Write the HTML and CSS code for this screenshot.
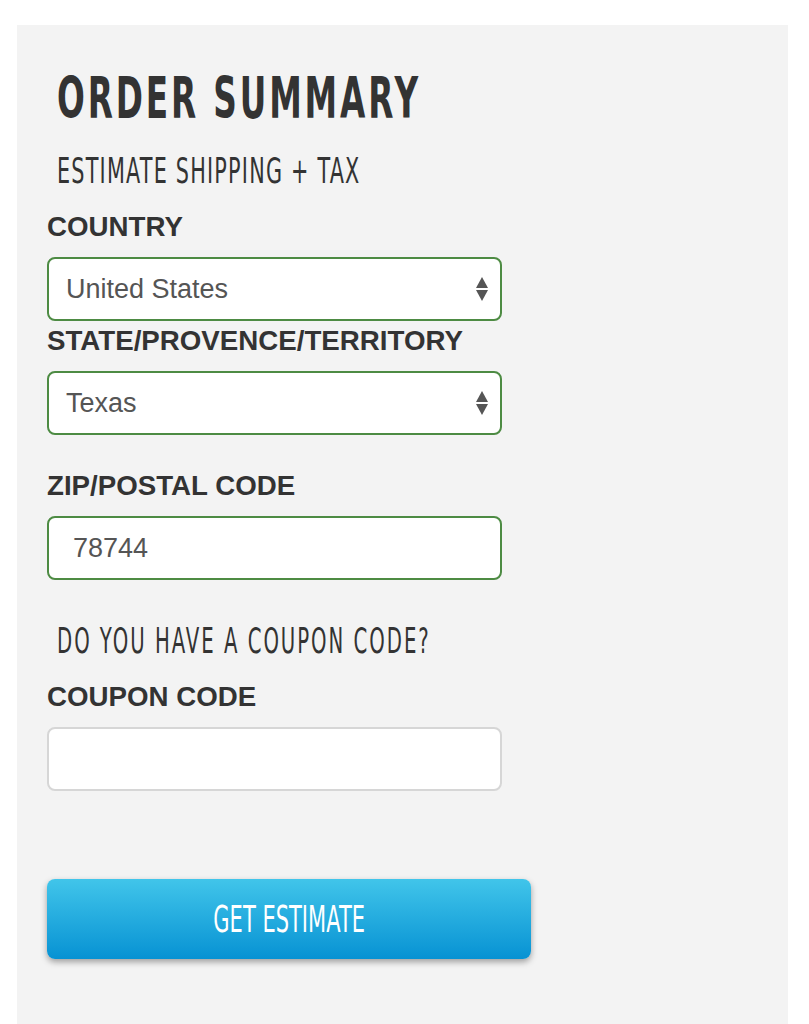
FILE: index.html
```html
<!DOCTYPE html>
<html lang="en">
<head>
  <meta charset="UTF-8">
  <title>Order Summary</title>
  <link rel="stylesheet" href="styles.css">
</head>
<body>
  <div class="summary">
    <h1 class="title">ORDER SUMMARY</h1>

    <h2 class="subtitle">ESTIMATE SHIPPING + TAX</h2>

    <form class="estimate">
      <label class="label" for="country">COUNTRY</label>
      <div class="select">
        <select id="country" name="country">
          <option>United States</option>
          <option>Canada</option>
        </select>
        <svg class="arrows" width="12" height="24" viewBox="0 0 12 24">
          <path d="M6 0 L12 11 L0 11 Z" fill="#555"/>
          <path d="M0 13 L12 13 L6 24 Z" fill="#555"/>
        </svg>
      </div>

      <label class="label label-tight" for="state">STATE/PROVENCE/TERRITORY</label>
      <div class="select">
        <select id="state" name="state">
          <option>Texas</option>
          <option>California</option>
        </select>
        <svg class="arrows" width="12" height="24" viewBox="0 0 12 24">
          <path d="M6 0 L12 11 L0 11 Z" fill="#555"/>
          <path d="M0 13 L12 13 L6 24 Z" fill="#555"/>
        </svg>
      </div>

      <label class="label label-gap" for="zip">ZIP/POSTAL CODE</label>
      <input class="text-input valid" id="zip" type="text" name="zip" value="78744">

      <h2 class="subtitle coupon-title">DO YOU HAVE A COUPON CODE?</h2>

      <label class="label" for="coupon">COUPON CODE</label>
      <input class="text-input" id="coupon" type="text" name="coupon">

      <button class="btn" type="button"><span class="btn-text">GET ESTIMATE</span></button>
    </form>
  </div>
</body>
</html>
```

FILE: styles.css
```css
body{
  margin: 0;
  background: #fff;
  font-family: 'Liberation Sans', Arial, sans-serif;
  color: #333;
}

.summary{
  margin: 25px 21px 0 17px;
  background: #f3f3f3;
  padding: 40px 30px 60px;
  min-height: 1000px;
  box-sizing: border-box;
}

/* no condensed font available, so the headings get squeezed */
.title,
.subtitle,
.btn{
  font-family: 'DejaVu Sans', sans-serif;
}

.title{
  margin: 0 0 0 10px;
  font-size: 57px;
  font-weight: bold;
  letter-spacing: 5px;
  line-height: 66px;
  color: #333;
  transform: scaleX(0.574);
  transform-origin: left center;
}

.subtitle{
  margin: 20px 0 0 10px;
  font-size: 35px;
  font-weight: normal;
  letter-spacing: 2px;
  line-height: 40px;
  color: #333;
  transform: scaleX(0.594);
  transform-origin: left center;
}

.estimate{
  display: flex;
  flex-direction: column;
  align-items: flex-start;
}

.label{
  display: block;
  margin-top: 20px;
  font-size: 27.7px;
  font-weight: bold;
  line-height: 32px;
  color: #333;
}
.label-tight{
  margin-top: 4px;
}
.label-gap{
  margin-top: 35px;
}

.select{
  position: relative;
  margin-top: 14px;
}
.select select{
  -webkit-appearance: none;
  appearance: none;
  width: 455px;
  height: 64px;
  padding: 0 40px 0 17px;
  border: 2px solid #4d8b43;
  border-radius: 8px;
  background: #fff;
  font-family: 'Liberation Sans', Arial, sans-serif;
  font-size: 27px;
  color: #555;
  outline: none;
}
.select .arrows{
  position: absolute;
  right: 14px;
  top: 20px;
  pointer-events: none;
}

.text-input{
  margin-top: 14px;
  width: 455px;
  height: 64px;
  box-sizing: border-box;
  padding: 0 24px;
  border: 2px solid #d6d6d6;
  border-radius: 8px;
  background: #fff;
  font-family: 'Liberation Sans', Arial, sans-serif;
  font-size: 27px;
  color: #555;
  outline: none;
}
.text-input.valid{
  border-color: #4d8b43;
}

.coupon-title{
  margin-top: 41px;
  letter-spacing: 3.5px;
  transform: scaleX(0.563);
}

.btn{
  margin-top: 88px;
  width: 484px;
  height: 80px;
  border: none;
  border-radius: 8px;
  background: linear-gradient(#41c5ea, #0792d3);
  box-shadow: 0 3px 6px rgba(0,0,0,.35);
  color: #fff;
  font-size: 38px;
  cursor: pointer;
}
.btn-text{
  display: inline-block;
  transform: scaleX(0.553);
}
```
